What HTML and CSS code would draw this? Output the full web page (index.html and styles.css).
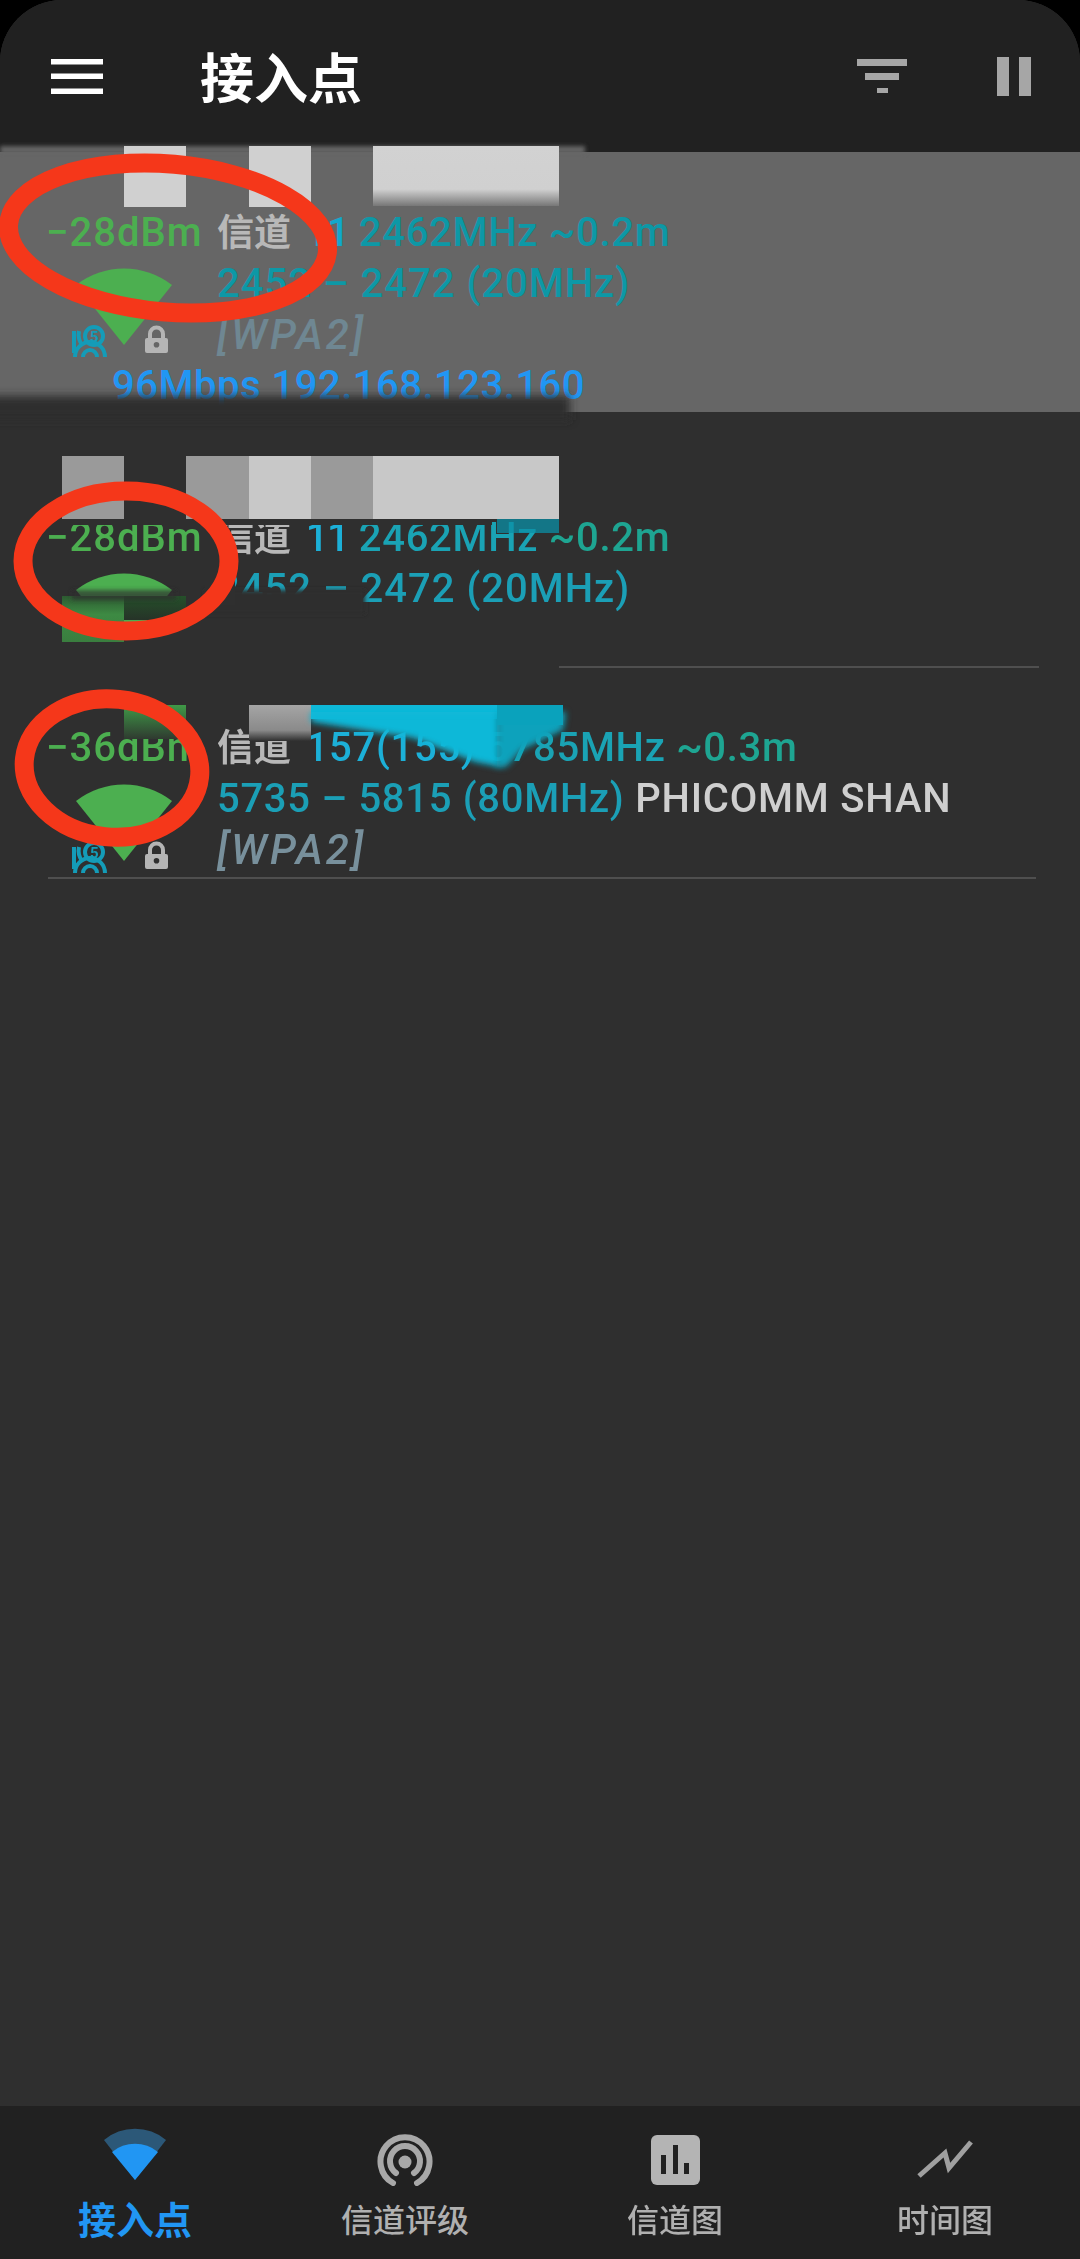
FILE: index.html
```html
<!DOCTYPE html>
<html lang="zh-CN">
<head>
<meta charset="utf-8">
<title>接入点</title>
<link rel="stylesheet" href="styles.css">
</head>
<body>
<div class="phone">
  <header class="appbar">
    <svg class="menu-icon" viewBox="0 0 52 35"><rect width="52" height="5.5" y="0"/><rect width="52" height="5.5" y="14.5"/><rect width="52" height="5.5" y="29.5"/></svg>
    <h1 class="title">接入点</h1>
    <svg class="filter-icon" viewBox="0 0 50 34"><rect x="0" y="0" width="50" height="7"/><rect x="8" y="14" width="34" height="7"/><rect x="20" y="29" width="11" height="5"/></svg>
    <svg class="pause-icon" viewBox="0 0 34 39"><rect x="0" y="0" width="12" height="39"/><rect x="22" y="0" width="12" height="39"/></svg>
  </header>

  <main class="list">
    <section class="ap ap-selected">
      <div class="ap-title"></div>
      <div class="ap-grid">
        <div class="signal">
          <div class="line dbm">−28dBm</div>
          <svg class="cluster" viewBox="0 0 100 88">
            <path class="wedge" d="M3 16A78 78 0 0 1 99 16L51 76Z"/>
            <g class="wifi5"><path d="M2 88A15 15 0 0 1 32 88"/><path d="M10 88A7 7 0 0 1 24 88"/><path d="M1 84V62"/><path d="M9 76A18 18 0 0 1 6 62"/><circle cx="21" cy="67" r="9"/><text x="17" y="73" class="five">5</text></g>
            <path class="lock" d="M72 71Q72 69 74 69H75V65A8 8 0 0 1 92 65V69H93Q95 69 95 71V82Q95 84 93 84H74Q72 84 72 82ZM79 69H88V65A4.500 4.500 0 0 0 79 65ZM83.500 73A2.800 2.800 0 1 0 83.501 78.600A2.800 2.800 0 1 0 83.500 73Z"/>
          </svg>
        </div>
        <div class="info">
          <div class="line"><span class="label">信道</span> <span class="chan chan-narrow">11</span> <span class="freq">2462MHz</span> <span class="dist">~0.2m</span></div>
          <div class="line range">2452 – 2472 (20MHz)</div>
          <div class="line sec">[WPA2]</div>
        </div>
      </div>
      <div class="line speed">96Mbps 192.168.123.160</div>
    </section>

    <section class="ap ap-second">
      <div class="ap-title ap-title-tall"></div>
      <div class="ap-grid">
        <div class="signal">
          <div class="line dbm">−28dBm</div>
          <svg class="cluster" viewBox="0 0 100 88"><path class="wedge" d="M3 16A78 78 0 0 1 99 16L70 52H32Z"/></svg>
        </div>
        <div class="info">
          <div class="line"><span class="label">信道</span> <span class="chan chan-narrow">11</span> <span class="freq">2462MHz</span> <span class="dist">~0.2m</span></div>
          <div class="line range">2452 – 2472 (20MHz)</div>
        </div>
      </div>
      <div class="ap-rule ap-rule-short"></div>
    </section>

    <section class="ap ap-third">
      <div class="ap-title"></div>
      <div class="ap-grid">
        <div class="signal">
          <div class="line dbm">−36dBm</div>
          <svg class="cluster" viewBox="0 0 100 88">
            <path class="wedge" d="M3 16A78 78 0 0 1 99 16L51 76Z"/>
            <g class="wifi5"><path d="M2 88A15 15 0 0 1 32 88"/><path d="M10 88A7 7 0 0 1 24 88"/><path d="M1 84V62"/><path d="M9 76A18 18 0 0 1 6 62"/><circle cx="21" cy="67" r="9"/><text x="17" y="73" class="five">5</text></g>
            <path class="lock" d="M72 71Q72 69 74 69H75V65A8 8 0 0 1 92 65V69H93Q95 69 95 71V82Q95 84 93 84H74Q72 84 72 82ZM79 69H88V65A4.500 4.500 0 0 0 79 65ZM83.500 73A2.800 2.800 0 1 0 83.501 78.600A2.800 2.800 0 1 0 83.500 73Z"/>
          </svg>
        </div>
        <div class="info">
          <div class="line"><span class="label">信道</span> <span class="chan">157(155)</span> <span class="freq">5785MHz</span> <span class="dist">~0.3m</span></div>
          <div class="line"><span class="range range-tight">5735 – 5815 (80MHz)</span> <span class="vendor">PHICOMM SHAN</span></div>
          <div class="line sec">[WPA2]</div>
        </div>
      </div>
      <div class="ap-rule"></div>
    </section>
  </main>

  <nav class="tabs">
    <div class="tab tab-active">
      <svg class="tab-icon" viewBox="0 0 70 58"><path class="wedge-dim" d="M4 12A48 48 0 0 1 66 12L35 52Z"/><path class="wedge-blue" d="M12 24A36 36 0 0 1 58 24L35 52Z"/></svg>
      <span class="tab-label">接入点</span>
    </div>
    <div class="tab">
      <svg class="tab-icon" viewBox="0 0 70 58"><g class="rings"><path class="ring-outer" d="M23 55A24.500 24.500 0 1 1 47 55"/><path class="ring-mid" d="M26 45A15 15 0 1 1 44 45"/></g><circle class="ring-core" cx="35" cy="34" r="6.500"/></svg>
      <span class="tab-label">信道评级</span>
    </div>
    <div class="tab">
      <svg class="tab-icon" viewBox="0 0 70 58"><rect class="bars-bg" x="11" y="7" width="49" height="50" rx="6"/><rect class="bars-bar" x="21" y="27" width="5" height="19"/><rect class="bars-bar" x="33" y="17" width="5" height="29"/><rect class="bars-bar" x="44" y="35" width="5" height="11"/></svg>
      <span class="tab-label">信道图</span>
    </div>
    <div class="tab">
      <svg class="tab-icon" viewBox="0 0 70 58"><path class="trend" d="M9 48L35 25L39 40L61 14"/></svg>
      <span class="tab-label">时间图</span>
    </div>
  </nav>

  <svg class="marks" viewBox="0 0 1080 2259">
    <defs>
      <filter id="soft" x="-20%" y="-50%" width="140%" height="200%"><feGaussianBlur stdDeviation="4"/></filter>
      <filter id="softer" x="-20%" y="-50%" width="140%" height="200%"><feGaussianBlur stdDeviation="2"/></filter>
      <filter id="smear" x="-10%" y="-20%" width="120%" height="140%"><feGaussianBlur stdDeviation="3"/></filter>
      <linearGradient id="fadeWhite" x1="0" y1="0" x2="0" y2="1"><stop offset="0" stop-color="#d2d2d2"/><stop offset=".72" stop-color="#d0d0d0"/><stop offset="1" stop-color="#777"/></linearGradient>
      <linearGradient id="fadeGreen" x1="0" y1="0" x2="0" y2="1"><stop offset="0" stop-color="#2d5a31"/><stop offset=".4" stop-color="#3d8a43"/><stop offset="1" stop-color="#3a7e3f"/></linearGradient>
      <linearGradient id="fadeDark" x1="0" y1="0" x2="0" y2="1"><stop offset="0" stop-color="#25502a"/><stop offset="1" stop-color="#263328"/></linearGradient>
      <linearGradient id="fadeGrey" x1="1" y1="0" x2="1" y2="1"><stop offset="0" stop-color="#a5a5a5"/><stop offset=".7" stop-color="#8a8a8a"/><stop offset="1" stop-color="#2f2f2f"/></linearGradient>
      <linearGradient id="fadeTop" x1="0" y1="0" x2="0" y2="1"><stop offset="0" stop-color="#3f9a47"/><stop offset="1" stop-color="#2f3a30"/></linearGradient>
    </defs>

    <!-- smeared edges of the selected row -->
    <rect class="fill-row" x="0" y="146" width="585" height="8" filter="url(#softer)"/>
    <rect class="fill-bg" x="-20" y="396" width="590" height="24" filter="url(#soft)"/>

    <!-- redaction blocks, row 1 -->
    <rect class="fill-light" x="124" y="146" width="62" height="61"/>
    <rect class="fill-light" x="249" y="146" width="62" height="61"/>
    <rect x="373" y="146" width="186" height="60" fill="url(#fadeWhite)"/>

    <!-- redaction blocks, row 2 -->
    <rect class="fill-mid" x="62" y="456" width="62" height="63"/>
    <rect class="fill-mid" x="186" y="456" width="63" height="63"/>
    <rect class="fill-pale" x="249" y="456" width="62" height="63"/>
    <rect class="fill-mid" x="311" y="456" width="62" height="63"/>
    <rect class="fill-pale" x="373" y="456" width="186" height="63"/>
    <rect class="fill-bg" x="62" y="519" width="430" height="6"/>
    <rect class="fill-teal-dark" x="497" y="519" width="62" height="14" opacity=".75"/>

    <rect class="fill-bg" x="205" y="590" width="160" height="24" filter="url(#softer)"/>
    <rect class="fill-bg" x="205" y="565" width="30" height="40"/>
    <rect x="62" y="596" width="62" height="46" fill="url(#fadeGreen)"/>
    <rect x="124" y="596" width="62" height="24" fill="url(#fadeDark)"/>
    <rect class="fill-bg" x="72" y="590" width="104" height="10" filter="url(#softer)" opacity=".7"/>

    <!-- redaction blocks, row 3 -->
    <rect x="124" y="705" width="62" height="34" fill="url(#fadeTop)"/>
    <rect x="249" y="705" width="62" height="36" fill="url(#fadeGrey)"/>
    <rect class="fill-cyan" x="311" y="705" width="186" height="14"/>
    <path class="fill-cyan" d="M311 712H500V767L475 762 413 738 311 722Z" filter="url(#smear)"/>
    <path class="fill-cyan-dark" d="M497 712H566L563 730 522 750 506 767H497Z" filter="url(#smear)"/>
    <rect class="fill-cyan-dark" x="497" y="705" width="66" height="20"/>

    <!-- hand-drawn annotations -->
    <ellipse class="scribble" cx="168" cy="238" rx="160" ry="74" transform="rotate(5 168 238)"/>
    <ellipse class="scribble" cx="126" cy="561" rx="103" ry="70"/>
    <ellipse class="scribble" cx="112" cy="768" rx="88" ry="69" transform="rotate(6 112 768)"/>
  </svg>
</div>
</body>
</html>
```

FILE: styles.css
```css
* { box-sizing: border-box; }
html, body { margin: 0; padding: 0; background: #000; }
body { width: 1080px; height: 2259px; overflow: hidden; }

.phone {
  position: relative;
  width: 1080px;
  height: 2259px;
  display: flex;
  flex-direction: column;
  background: #2f2f2f;
  border-radius: 62px 62px 0 0;
  overflow: hidden;
  font-family: Roboto, "Noto Sans CJK SC", sans-serif;
  filter: blur(0.6px);
}

.appbar {
  height: 152px;
  flex: none;
  display: flex;
  align-items: center;
  padding: 0 49px 0 51px;
  background: #212121;
}
.menu-icon { width: 52px; height: 35px; fill: #fff; }
.title {
  margin: 0 0 0 97px;
  flex: 1;
  font: 700 54px/60px "Noto Sans CJK SC", sans-serif;
  color: #fff;
}
.filter-icon { width: 50px; height: 34px; fill: #a6a6a6; }
.pause-icon { width: 34px; height: 39px; margin-left: 90px; fill: #a6a6a6; }

.list { flex: 1; }
.ap { position: relative; padding-left: 46px; }
.ap-selected { height: 260px; background: #666; }
.ap-second { height: 255px; }
.ap-third { height: 211px; }
.ap-title { height: 55px; }
.ap-title-tall { height: 100px; }

.ap-grid { display: grid; grid-template-columns: 171px 1fr; }
.ap-second .ap-grid { height: 154px; }
.signal { position: relative; }
.cluster { display: block; width: 100px; height: 88px; margin: 11px 0 0 27px; overflow: visible; }
.ap-third .cluster { margin-top: 12px; }

.line {
  height: 51px;
  font-size: 40px;
  line-height: 51px;
  font-weight: 500;
  letter-spacing: 0.7px;
  white-space: nowrap;
}
.dbm { color: #4caf50; letter-spacing: 1px; }
.label { margin-right: 4px; font-size: 37px; color: #b8b8b8; letter-spacing: 0; font-weight: 700; }
.chan { color: #1cb0d8; }
.chan-narrow { letter-spacing: -1.5px; }
.freq { color: #1aa3b4; }
.dist { color: #1ea592; }
.range { color: #1b9fb6; letter-spacing: 1px; }
.range-tight { letter-spacing: 0.7px; }
.vendor { color: #cfcfcf; letter-spacing: 0.8px; }
.sec { color: #78909c; font-style: italic; font-size: 42px; letter-spacing: 3px; }
.speed { padding-left: 66px; color: #2196f3; letter-spacing: 0.5px; }

.ap-selected .freq, .ap-selected .dist, .ap-selected .range { color: #0d98a6; }
.ap-selected .chan { color: #12a8cc; }
.ap-selected .sec { color: #6f8792; }

.ap-rule { height: 2px; margin: 2px 44px 0 2px; background: #4f4f4f; }
.ap-rule-short { margin: 0 41px 0 513px; }

.wedge { fill: #4caf50; }
.wifi5 { fill: none; stroke: #149cb8; stroke-width: 4; }
.five { fill: #149cb8; stroke: none; font: 700 15px Roboto, sans-serif; }
.lock { fill: #b5b5b5; fill-rule: evenodd; }

.tabs {
  flex: none;
  height: 153px;
  display: flex;
  background: #212121;
}
.tab {
  flex: 1;
  padding-top: 22px;
  display: flex;
  flex-direction: column;
  align-items: center;
}
.tab-icon { width: 70px; height: 58px; flex: none; }
.tab-label {
  margin-top: 10px;
  font: 500 32px/44px "Noto Sans CJK SC", sans-serif;
  color: #b0b0b0;
}
.tab-active .tab-label { font-size: 38px; font-weight: 700; color: #2196f3; }
.wedge-dim { fill: #2c5878; }
.wedge-blue { fill: #2196f3; }
.rings { fill: none; stroke: #a8a8a8; stroke-linecap: round; }
.ring-outer { stroke-width: 6; }
.ring-mid { stroke-width: 6; }
.ring-core { fill: #a8a8a8; }
.bars-bg { fill: #b4b4b4; }
.bars-bar { fill: #212121; }
.trend { fill: none; stroke: #a0a0a0; stroke-width: 5; }

.marks {
  position: absolute;
  left: 0;
  top: 0;
  width: 1080px;
  height: 2259px;
  pointer-events: none;
}
.fill-row { fill: #666; }
.fill-bg { fill: #2f2f2f; }
.fill-light { fill: #d0d0d0; }
.fill-mid { fill: #9a9a9a; }
.fill-pale { fill: #c8c8c8; }
.fill-teal-dark { fill: #0b8fa5; }
.fill-cyan { fill: #0fb8d8; }
.fill-cyan-dark { fill: #0aa2bc; }
.scribble { fill: none; stroke: #f5371a; stroke-width: 19; }
```
